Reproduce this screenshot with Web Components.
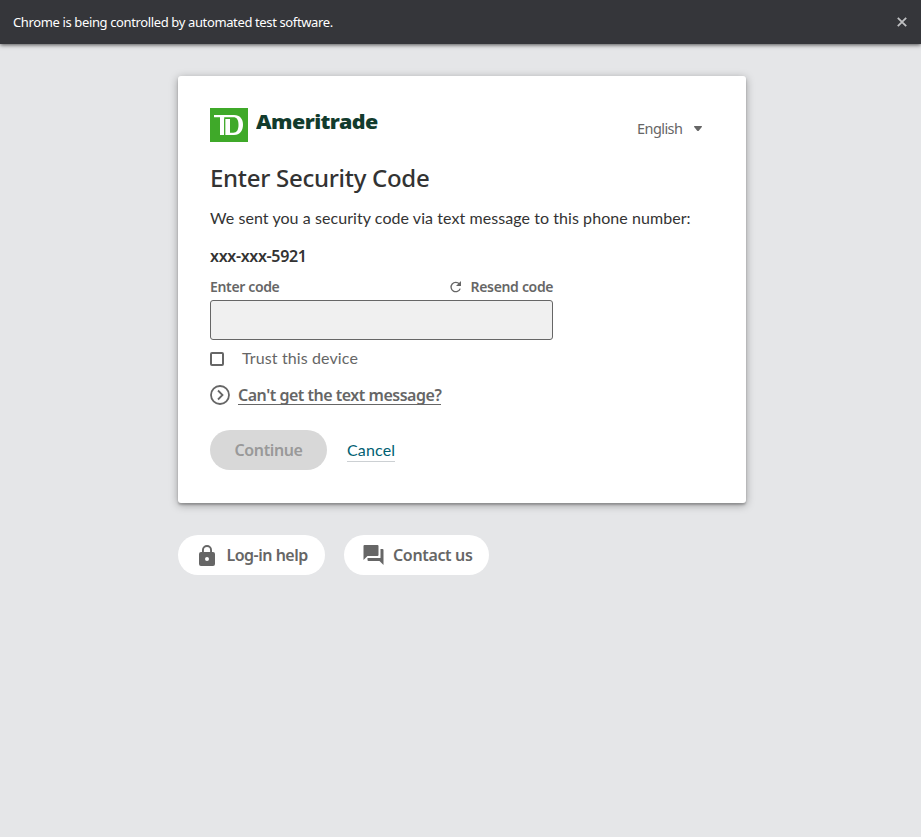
<!DOCTYPE html>
<html lang="en"><head><meta charset="utf-8"><title>Enter Security Code</title>
<style>html,body{margin:0;height:100%;background:#e5e6e8;overflow:hidden}</style></head>
<body><login-page></login-page>
<script>
const define=(name,markup)=>customElements.define(name,class extends HTMLElement{
  constructor(){super();const t=document.createElement('template');t.innerHTML=markup;
    this.attachShadow({mode:'open'}).append(t.content.cloneNode(true));}
});
// One line of text, tracked so that it fills the width given by its "w" attribute.
customElements.define('fit-text',class extends HTMLElement{
  connectedCallback(){
    if(this.shadowRoot)return;
    this.attachShadow({mode:'open'}).innerHTML='<style>:host{display:block;white-space:nowrap;width:max-content}</style><span></span>';
    const s=this.shadowRoot.querySelector('span');s.textContent=this.getAttribute('text');
    const w=+this.getAttribute('w');
    s.style.letterSpacing=(w-s.offsetWidth)/s.textContent.length+'px';
    this.style.width=w+'px';
  }
});
define('info-bar',`<style>
:host{display:flex;height:44px;box-sizing:border-box;background:#35363a;color:#fff;align-items:center;justify-content:space-between;padding:0 14px 0 13px;box-shadow:0 1px 4px rgba(0,0,0,.65);font:13px/20px "Noto Sans",sans-serif}
</style><fit-text w="320" text="Chrome is being controlled by automated test software."></fit-text>
<svg width="10" height="10" viewBox="0 0 10 10"><path d="M.8.8l8.4 8.4M9.2.8L.8 9.2" stroke="#bfc0c2" stroke-width="1.8"/></svg>`);
define('brand-logo',`<style>:host{display:flex;gap:8px;color:#123b2d;font:900 19px/28px "Noto Sans",sans-serif}svg{display:block}
fit-text{transform:scaleX(1.13);transform-origin:0 0}</style>
<svg width="38" height="34" viewBox="0 0 38 34"><rect width="38" height="34" fill="#3fa929"/><path fill="#fff" d="M4 7h20c6 0 9 4 9 9.700s-3 10.300-9 10.300H15.200V11h4.800v13.800h3.200c3.700 0 5.300-3 5.300-8s-1.600-7.600-5.300-7.600H14.200V27H10V9.200H4z"/><path d="M14.700 11v16" stroke="#3fa929" stroke-width="1"/></svg>
<fit-text w="108" text="Ameritrade"></fit-text>`);
define('language-menu',`<style>:host{display:flex;align-items:center;gap:12px;color:#666;font:14.500px/20px "Noto Sans",sans-serif}fit-text{margin-bottom:1px}</style>
<fit-text w="45" text="English"></fit-text><svg width="8" height="5" viewBox="0 0 8 5"><path d="M.3 0h7.400L8 .8 4.800 4.700Q4 5.300 3.200 4.700L0 .8z" fill="#666"/></svg>`);
define('code-field',`<style>:host{display:block;width:343px;color:#666;font:600 14px/20px "Noto Sans",sans-serif}
.top,.resend{display:flex;justify-content:space-between;align-items:center}.resend{gap:9px}
input{display:block;width:100%;height:40px;box-sizing:border-box;margin:3px 0 0;border:1px solid #666;border-radius:3px;background:#f0f0f0;outline:0}
</style><div class="top"><fit-text w="69.500" text="Enter code"></fit-text><div class="resend"><svg width="12" height="12" viewBox="0 0 12 12"><path d="M9.400 3A4.700 4.700 0 1 0 10.200 7.600" fill="none" stroke="#666" stroke-width="1.300"/><path d="M11 0v5H6z" fill="#666"/></svg><fit-text w="82.500" text="Resend code"></fit-text></div></div><input aria-label="Enter code">`);
define('trust-option',`<style>:host{display:flex;align-items:center;gap:18px;color:#666;font:16px/20px Lato,sans-serif}i{box-sizing:border-box;width:14px;height:14px;border:2px solid #666;border-radius:2px}fit-text{margin:-1px 0 1px}</style><i></i><fit-text w="116" text="Trust this device"></fit-text>`);
define('help-link',`<style>:host{display:flex;align-items:center;gap:8px;color:#666;font:600 16px/19px "Noto Sans",sans-serif}span{border-bottom:1px solid #666}fit-text{padding-top:1px;margin-bottom:-1px}</style>
<svg width="20" height="20" viewBox="0 0 20 20" fill="none" stroke="#666" stroke-width="1.800"><circle cx="10" cy="10" r="9"/><path d="M8 5.500l4.500 4.500L8 14.500"/></svg><span><fit-text w="203" text="Can't get the text message?"></fit-text></span>`);
define('form-actions',`<style>:host{display:flex;align-items:center;gap:20px}button{display:flex;align-items:center;justify-content:center;width:117px;height:40px;padding:0;border:0;border-radius:20px;background:#d8d8d8;color:#999;font:600 16px/20px "Noto Sans",sans-serif}a{margin-top:2px;color:#006072;border-bottom:1px solid #ccd0d3;font:16px/18px Lato,sans-serif;padding-bottom:2px}</style>
<button><fit-text w="68" text="Continue"></fit-text></button><a><fit-text w="48" text="Cancel"></fit-text></a>`);
define('pill-button',`<style>:host{display:flex;box-sizing:border-box;height:40px;border-radius:20px;background:#fff;color:#666;align-items:center;font:600 16px/20px "Noto Sans",sans-serif}</style><slot name="icon"></slot><slot></slot>`);
define('security-card',`<style>:host{display:block;box-sizing:border-box;width:568px;height:427px;padding:32px;background:#fff;border-radius:3px;box-shadow:0 2px 2px rgba(0,0,0,.2),0 2px 8px rgba(0,0,0,.34);color:#333}
header{display:flex;justify-content:space-between;height:52px;padding-right:12px}language-menu{height:40px}
h1{margin:0;font:500 24px/36px "Noto Sans",sans-serif}
p{margin:12px 0 0;font:16px/20px Lato,sans-serif}
.phone{margin-top:17px;font:600 16px/22px "Noto Sans",sans-serif}
code-field{margin-top:10px}trust-option{margin-top:9px}help-link{margin-top:16px}form-actions{margin-top:25px}</style>
<header><brand-logo></brand-logo><language-menu></language-menu></header>
<h1><fit-text w="219.500" text="Enter Security Code"></fit-text></h1>
<p><fit-text w="480.500" text="We sent you a security code via text message to this phone number:"></fit-text></p>
<p class="phone"><fit-text w="97" text="xxx-xxx-5921"></fit-text></p>
<code-field></code-field><trust-option></trust-option><help-link></help-link><form-actions></form-actions>`);
define('login-page',`<style>:host{display:block;min-height:837px}main{padding:32px 0 0 178px}nav{display:flex;gap:19px;margin-top:32px}.login{width:147px;padding-left:21px;gap:11.500px}.contact{width:145px;padding-left:19px;gap:9px}</style>
<info-bar></info-bar><main><security-card></security-card><nav>
<pill-button class="login"><svg slot="icon" width="16" height="21" viewBox="4 1 16 21"><path fill="#666" d="M18 8h-1V6A5 5 0 0 0 7 6v2H6a2 2 0 0 0-2 2v10a2 2 0 0 0 2 2h12a2 2 0 0 0 2-2V10a2 2 0 0 0-2-2zm-6 9a2 2 0 1 1 0-4 2 2 0 0 1 0 4zm3.100-9H8.900V6a3.100 3.100 0 0 1 6.200 0z"/></svg><fit-text w="81.500" text="Log-in help"></fit-text></pill-button>
<pill-button class="contact"><svg slot="icon" width="21" height="20" viewBox="2 2 20 20"><path fill="#666" d="M21 6h-2v9H6v2a1 1 0 0 0 1 1h11l4 4V7a1 1 0 0 0-1-1zm-4 6V3a1 1 0 0 0-1-1H3a1 1 0 0 0-1 1v14l4-4h10a1 1 0 0 0 1-1z"/></svg><fit-text w="79.500" text="Contact us"></fit-text></pill-button></nav></main>`);
</script></body></html>
